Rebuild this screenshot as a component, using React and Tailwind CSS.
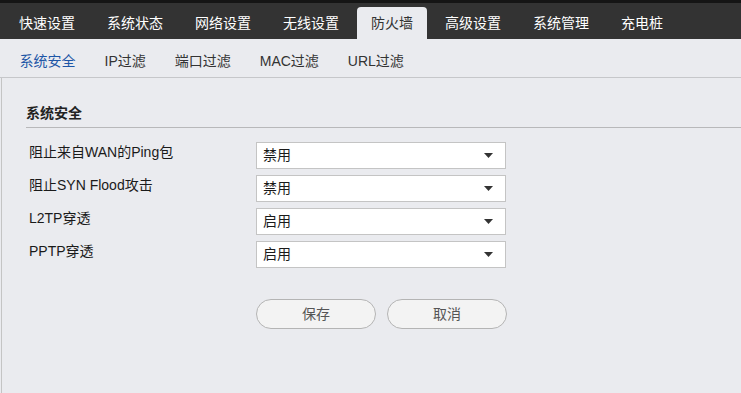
import { useState } from 'react'

const topNav = ['快速设置', '系统状态', '网络设置', '无线设置', '防火墙', '高级设置', '系统管理', '充电桩']
const subNav = ['系统安全', 'IP过滤', '端口过滤', 'MAC过滤', 'URL过滤']

const rows = [
  { label: '阻止来自WAN的Ping包', value: '禁用' },
  { label: '阻止SYN Flood攻击', value: '禁用' },
  { label: 'L2TP穿透', value: '启用' },
  { label: 'PPTP穿透', value: '启用' },
]

function Caret() {
  return (
    <svg width="9" height="5" viewBox="0 0 9 5" className="shrink-0">
      <path d="M0 0 H9 L4.5 5 Z" fill="#333" />
    </svg>
  )
}

export default function App() {
  const [active] = useState('防火墙')
  const [sub] = useState('系统安全')

  return (
    <div
      className="w-[741px] h-[393px] overflow-hidden bg-[#eaebef] text-[14px] flex flex-col"
      style={{ fontFamily: '"Liberation Sans", "Noto Sans CJK SC", sans-serif' }}
    >
      {/* top navigation */}
      <div className="border-t-[3px] border-[#151515] bg-[#333333] h-[39px] flex items-end pl-[5px] gap-[4px]">
        {topNav.map(item => (
          <div
            key={item}
            className={
              item === active
                ? 'h-[32px] px-[14px] flex items-center rounded-t-[4px] bg-[#eaebef] text-[#333]'
                : 'h-[32px] px-[14px] flex items-center text-white'
            }
          >
            {item}
          </div>
        ))}
      </div>

      {/* sub navigation */}
      <div className="h-[39px] border-b border-[#c6c7ca] flex pl-[5px]">
        {subNav.map(item => (
          <div
            key={item}
            className={
              item === sub
                ? 'px-[14.5px] pt-[12px] leading-5 text-[#1d56a6]'
                : 'px-[14.5px] pt-[12px] leading-5 text-[#333]'
            }
          >
            {item}
          </div>
        ))}
      </div>

      {/* content */}
      <div className="flex-1 ml-px border-l border-[#c4c4c4] pl-[24px]">
        <div className="mt-[25px] pb-[4px] border-b border-[#b8b8ba] leading-5 font-bold text-[#222]">
          系统安全
        </div>

        <div className="mt-[14px] flex flex-col gap-[6px]">
          {rows.map(row => (
            <div key={row.label} className="flex items-start">
              <div className="w-[230px] pl-[3px] leading-5 text-[#1a1a1a]">{row.label}</div>
              <div className="w-[250px] h-[27px] bg-white border border-[#c4c4c4] flex items-center justify-between pl-[6px] pr-[12px] text-[#1a1a1a]">
                <span>{row.value}</span>
                <Caret />
              </div>
            </div>
          ))}
        </div>

        <div className="mt-[31px] ml-[230px] flex gap-[11px]">
          <button className="w-[120px] h-[30px] rounded-full border border-[#b4b4b4] bg-[#f3f3f3] text-[#555]">
            保存
          </button>
          <button className="w-[120px] h-[30px] rounded-full border border-[#b4b4b4] bg-[#f3f3f3] text-[#555]">
            取消
          </button>
        </div>
      </div>
    </div>
  )
}
